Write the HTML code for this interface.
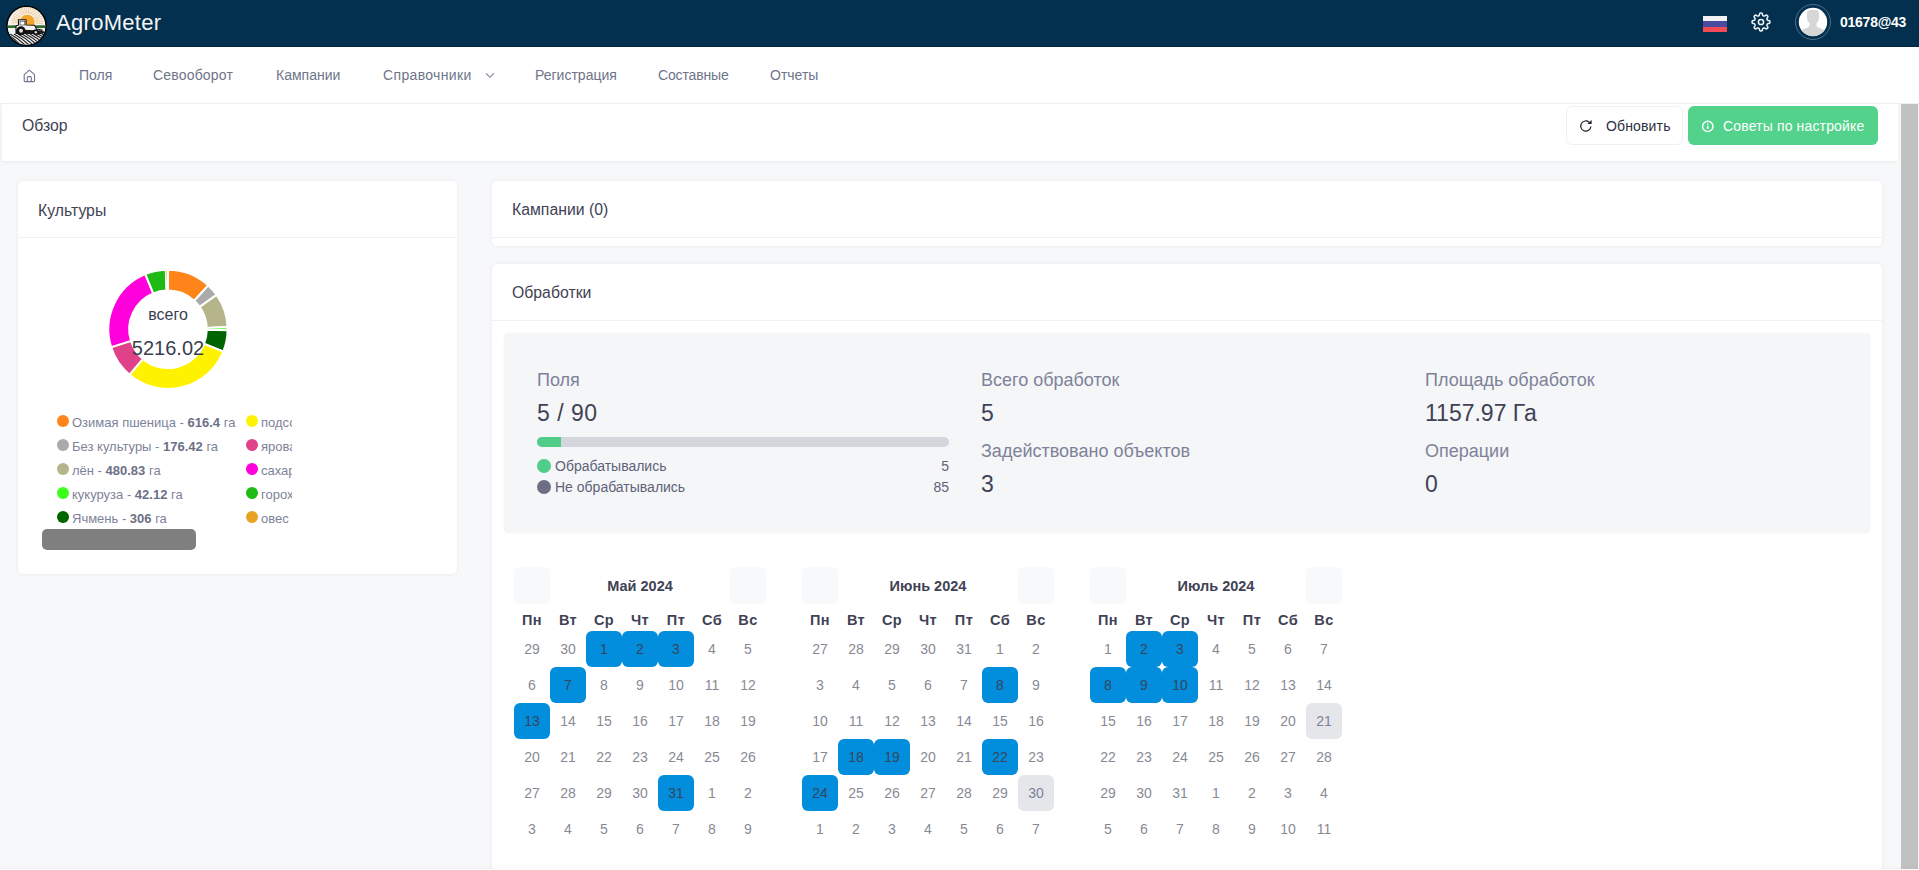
<!DOCTYPE html>
<html><head><meta charset="utf-8">
<style>
*{box-sizing:border-box;margin:0;padding:0}
html,body{width:1919px;height:870px;overflow:hidden}
body{position:relative;background:#f7f8fa;font-family:"Liberation Sans",sans-serif;color:#3f4254}
.abs{position:absolute}
#hdr{left:0;top:0;width:1919px;height:47px;background:#03304e;border-bottom:1px solid #012642}
#logo{left:6px;top:6px;width:40px;height:40px;border-radius:50%;background:#000;overflow:hidden}
#brand{left:56px;top:10px;font-size:22px;color:#f4f5f7;letter-spacing:0.3px;line-height:26px}
#user{left:1840px;top:14px;font-size:14px;font-weight:700;color:#fff;line-height:16px;letter-spacing:-0.25px}
#nav{left:0;top:47px;width:1919px;height:56px;background:#fff}
.nv{position:absolute;top:20px;font-size:14px;color:#6e7489;line-height:16px;white-space:nowrap}
#toolbar{left:2px;top:103px;width:1896px;height:58px;background:#fff;box-shadow:0 1px 4px rgba(0,0,0,0.06);border-top:1px solid #eef0f3}
.card{position:absolute;background:#fff;border-radius:5px;box-shadow:0 0 4px rgba(82,63,105,0.07)}
.ctitle{position:absolute;font-size:15.8px;color:#3f4254;white-space:nowrap;line-height:18px}
.chr{position:absolute;left:0;right:0;height:1px;background:#eff2f5}
#sb{left:1901px;top:104px;width:17px;height:765px;background:#c1c1c1}

.sbox{position:absolute;left:12px;top:69px;width:1366px;height:200px;background:#f5f6f8;border-radius:5px;box-shadow:0 0 1px rgba(0,0,0,0.12)}
.lbl{position:absolute;font-size:18px;line-height:20px;color:#7e8299;white-space:nowrap}
.val{position:absolute;font-size:23px;line-height:26px;color:#3f4254;white-space:nowrap;letter-spacing:0}
.pbar{position:absolute;left:33px;top:104px;width:412px;height:10px;border-radius:5px;background:#d5d5de;overflow:hidden}
.pbar i{position:absolute;left:0;top:0;width:24px;height:10px;background:#50cd89}
.lg{position:absolute;font-size:14px;line-height:16px;color:#5e6278;white-space:nowrap}
.dot{position:absolute;width:14px;height:14px;border-radius:50%}
.cal{position:absolute;width:252px;height:290px}
.cnav{position:absolute;top:0;width:36px;height:37px;background:#f8f9fa;border-radius:5px}
.ctt{position:absolute;left:0;width:252px;top:11px;text-align:center;font-size:14.5px;line-height:16px;font-weight:700;color:#3f4254}
.wd{position:absolute;top:45px;width:36px;text-align:center;font-size:14.5px;letter-spacing:0.4px;line-height:16px;font-weight:700;color:#3f4254}
.dy{position:absolute;width:36px;height:36px;line-height:37px;text-align:center;font-size:14px;color:#878a94;border-radius:6px}
.dy.sel{background:#038ddd;color:#33475a}
.dy.tdy{background:#e4e6ea;color:#7e8299}

.dtx{position:absolute;left:118px;width:100px;text-align:center;color:#3a3f4f;white-space:nowrap}
.ldot{position:absolute;width:12px;height:12px;border-radius:50%;margin-top:0}
.ltx{position:absolute;font-size:13px;line-height:15px;color:#7e8299;white-space:nowrap}
.ltx b{color:#6c7086}
</style></head><body>

<div id="hdr" class="abs">
  <svg class="abs" style="left:6px;top:5px" width="41" height="42" viewBox="0 0 41 42">
<defs><clipPath id="lc"><circle cx="20.5" cy="20.8" r="18.8"/></clipPath></defs>
<circle cx="20.5" cy="20.8" r="20.4" fill="#060606"/>
<g clip-path="url(#lc)">
<rect x="0" y="0" width="41" height="42" fill="#f6f4f0"/>
<g stroke="#f1c690" stroke-width="1" opacity="0.85"><line x1="29.6" y1="18.0" x2="37.2" y2="18.8"/><line x1="29.6" y1="16.7" x2="37.3" y2="16.3"/><line x1="29.4" y1="15.4" x2="37.0" y2="13.8"/><line x1="29.0" y1="14.1" x2="36.2" y2="11.4"/><line x1="28.5" y1="13.0" x2="35.2" y2="9.1"/><line x1="27.8" y1="11.9" x2="33.7" y2="7.0"/><line x1="26.9" y1="10.9" x2="32.0" y2="5.2"/><line x1="25.8" y1="10.1" x2="30.0" y2="3.7"/><line x1="24.7" y1="9.5" x2="27.8" y2="2.5"/><line x1="23.4" y1="9.1" x2="25.4" y2="1.6"/><line x1="22.2" y1="8.8" x2="23.0" y2="1.2"/><line x1="20.9" y1="8.8" x2="20.5" y2="1.1"/><line x1="19.6" y1="9.0" x2="18.0" y2="1.4"/><line x1="18.3" y1="9.4" x2="15.6" y2="2.2"/><line x1="17.2" y1="9.9" x2="13.3" y2="3.2"/><line x1="16.1" y1="10.6" x2="11.2" y2="4.7"/><line x1="15.1" y1="11.5" x2="9.4" y2="6.4"/><line x1="14.3" y1="12.6" x2="7.9" y2="8.4"/><line x1="13.7" y1="13.7" x2="6.7" y2="10.6"/><line x1="13.3" y1="15.0" x2="5.8" y2="13.0"/><line x1="13.0" y1="16.2" x2="5.4" y2="15.4"/><line x1="13.0" y1="17.5" x2="5.3" y2="17.9"/></g>
<circle cx="21.3" cy="17.1" r="7.4" fill="#f2a528"/>
<path d="M0 20.6 Q10 19.6 20 21 Q30 19.8 41 20.4 L41 23 L0 23 Z" fill="#2f6d2c"/>
<rect x="0" y="23" width="41" height="20" fill="#f0f0f0"/>
<g stroke="#1a1a1a" stroke-width="1.2" fill="none"><path d="M-12 29 Q-2 34 8 45"/><path d="M-8 29 Q2 34 12 45"/><path d="M-4 29 Q6 34 16 45"/><path d="M0 29 Q10 34 20 45"/><path d="M4 29 Q14 34 24 45"/><path d="M8 29 Q18 34 28 45"/><path d="M12 29 Q22 34 32 45"/><path d="M16 29 Q26 34 36 45"/><path d="M20 29 Q30 34 40 45"/><path d="M24 29 Q34 34 44 45"/><path d="M28 29 Q38 34 48 45"/><path d="M32 29 Q42 34 52 45"/><path d="M36 29 Q46 34 56 45"/><path d="M40 29 Q50 34 60 45"/></g>
<rect x="0" y="23" width="41" height="5.5" fill="#efefef"/>
<path d="M7 23 L41 23 L41 28.5 L7 28.5 Z" fill="none"/>
<path d="M10 28.5 L10 21 L12.5 20 L12.5 14.8 L20 14.8 L20 20 L28.5 20.3 L30.5 24 L36 25 L36 28.5 Z" fill="#f4f4f4" stroke="#111" stroke-width="1.1" stroke-linejoin="round"/>
<rect x="14" y="16.2" width="4.8" height="3.8" fill="#fff" stroke="#222" stroke-width="0.6"/>
<path d="M10 24.5 L36 25.5 L36 29 L10 29 Z" fill="#161616"/>
<circle cx="15" cy="25.8" r="4.5" fill="#111"/><circle cx="15" cy="25.8" r="2" fill="#dcdcdc"/>
<circle cx="29.8" cy="27.2" r="2.9" fill="#111"/><circle cx="29.8" cy="27.2" r="1.2" fill="#dcdcdc"/>
<path d="M34 27 L38 26 L39 28.5 L34 29 Z" fill="#222"/>
</g></svg>
  <div id="brand" class="abs">AgroMeter</div>
  <div id="user" class="abs">01678@43</div>
<div class="abs" style="left:1703px;top:16px;width:24px;height:16px;background:linear-gradient(#f2f2f2 0 5.5px,#4a4ba0 5.5px 11px,#f24b55 11px)"></div>
<svg class="abs" style="left:1751px;top:12px" width="20" height="20" viewBox="0 0 20 20"><path d="M10.0 1.1L10.3 1.1L10.6 1.1L10.9 1.2L11.1 1.4L11.4 1.8L11.5 2.4L11.6 3.0L11.8 3.4L11.9 3.6L12.1 3.7L12.3 3.8L12.5 3.9L12.7 4.0L12.9 4.1L13.1 4.1L13.4 4.1L13.8 3.9L14.3 3.6L14.9 3.2L15.3 3.1L15.6 3.2L15.9 3.3L16.1 3.5L16.3 3.7L16.5 3.9L16.7 4.1L16.8 4.4L16.9 4.7L16.8 5.1L16.4 5.7L16.1 6.2L15.9 6.6L15.9 6.9L15.9 7.1L16.0 7.3L16.1 7.5L16.2 7.7L16.3 7.9L16.4 8.1L16.6 8.2L17.0 8.4L17.6 8.5L18.2 8.6L18.6 8.9L18.8 9.1L18.9 9.4L18.9 9.7L18.9 10.0L18.9 10.3L18.9 10.6L18.8 10.9L18.6 11.1L18.2 11.4L17.6 11.5L17.0 11.6L16.6 11.8L16.4 11.9L16.3 12.1L16.2 12.3L16.1 12.5L16.0 12.7L15.9 12.9L15.9 13.1L15.9 13.4L16.1 13.8L16.4 14.3L16.8 14.9L16.9 15.3L16.8 15.6L16.7 15.9L16.5 16.1L16.3 16.3L16.1 16.5L15.9 16.7L15.6 16.8L15.3 16.9L14.9 16.8L14.3 16.4L13.8 16.1L13.4 15.9L13.1 15.9L12.9 15.9L12.7 16.0L12.5 16.1L12.3 16.2L12.1 16.3L11.9 16.4L11.8 16.6L11.6 17.0L11.5 17.6L11.4 18.2L11.1 18.6L10.9 18.8L10.6 18.9L10.3 18.9L10.0 18.9L9.7 18.9L9.4 18.9L9.1 18.8L8.9 18.6L8.6 18.2L8.5 17.6L8.4 17.0L8.2 16.6L8.1 16.4L7.9 16.3L7.7 16.2L7.5 16.1L7.3 16.0L7.1 15.9L6.9 15.9L6.6 15.9L6.2 16.1L5.7 16.4L5.1 16.8L4.7 16.9L4.4 16.8L4.1 16.7L3.9 16.5L3.7 16.3L3.5 16.1L3.3 15.9L3.2 15.6L3.1 15.3L3.2 14.9L3.6 14.3L3.9 13.8L4.1 13.4L4.1 13.1L4.1 12.9L4.0 12.7L3.9 12.5L3.8 12.3L3.7 12.1L3.6 11.9L3.4 11.8L3.0 11.6L2.4 11.5L1.8 11.4L1.4 11.1L1.2 10.9L1.1 10.6L1.1 10.3L1.1 10.0L1.1 9.7L1.1 9.4L1.2 9.1L1.4 8.9L1.8 8.6L2.4 8.5L3.0 8.4L3.4 8.2L3.6 8.1L3.7 7.9L3.8 7.7L3.9 7.5L4.0 7.3L4.1 7.1L4.1 6.9L4.1 6.6L3.9 6.2L3.6 5.7L3.2 5.1L3.1 4.7L3.2 4.4L3.3 4.1L3.5 3.9L3.7 3.7L3.9 3.5L4.1 3.3L4.4 3.2L4.7 3.1L5.1 3.2L5.7 3.6L6.2 3.9L6.6 4.1L6.9 4.1L7.1 4.1L7.3 4.0L7.5 3.9L7.7 3.8L7.9 3.7L8.1 3.6L8.2 3.4L8.4 3.0L8.5 2.4L8.6 1.8L8.9 1.4L9.1 1.2L9.4 1.1L9.7 1.1Z" fill="none" stroke="#f2f4f6" stroke-width="1.5" stroke-linejoin="round"/><circle cx="10" cy="10" r="2.6" fill="none" stroke="#f2f4f6" stroke-width="1.5"/></svg>
<svg class="abs" style="left:1795px;top:4px" width="36" height="36" viewBox="0 0 36 36">
<circle cx="18" cy="18" r="17.5" fill="none" stroke="#4f6d87" stroke-width="1"/>
<defs><clipPath id="ac"><circle cx="18" cy="18" r="14.2"/></clipPath></defs>
<circle cx="18" cy="18" r="14.2" fill="#fff"/>
<g clip-path="url(#ac)" fill="#d6d6d6">
<path d="M12 9.5 Q12 6 15.5 6 L20.5 6 Q24 6 24 9.5 L24 14 Q24 17 21.5 19 L21.5 21.5 Q22 23.5 26 24.5 Q31 26 32 32 L4 32 Q5 26 10 24.5 Q14 23.5 14.5 21.5 L14.5 19 Q12 17 12 14 Z"/>
</g></svg>

</div>

<div id="nav" class="abs"></div>
<svg class="abs" style="left:23px;top:69px" width="13" height="14" viewBox="0 0 13 14"><path d="M1.2 5.6 L6.3 1.2 L11.5 5.6 L11.5 11.8 Q11.5 12.6 10.7 12.6 L2 12.6 Q1.2 12.6 1.2 11.8 Z M4.3 12.6 L4.3 8.6 Q4.3 7.6 5.3 7.6 L7.3 7.6 Q8.3 7.6 8.3 8.6 L8.3 12.6" fill="none" stroke="#6d7290" stroke-width="1.1" stroke-linejoin="round"/></svg>
<svg class="abs" style="left:485px;top:72px" width="10" height="7" viewBox="0 0 10 7"><path d="M1 1.3 L5 5.3 L9 1.3" fill="none" stroke="#7e8299" stroke-width="1.1"/></svg>
<div class="abs" style="left:0;top:47px">
  <span class="nv" style="left:79px">Поля</span>
  <span class="nv" style="left:153px;letter-spacing:0.18px">Севооборот</span>
  <span class="nv" style="left:276px">Кампании</span>
  <span class="nv" style="left:383px;letter-spacing:0.35px">Справочники</span>
  <span class="nv" style="left:535px">Регистрация</span>
  <span class="nv" style="left:658px;letter-spacing:-0.15px">Составные</span>
  <span class="nv" style="left:770px">Отчеты</span>
</div>

<div id="toolbar" class="abs">
  <div class="abs" style="left:20px;top:13px;font-size:15.8px;line-height:18px;color:#3f4254">Обзор</div>
</div>

<div class="card" style="left:18px;top:181px;width:439px;height:393px">
  <div class="ctitle" style="left:20px;top:20.5px">Культуры</div>
  <div class="chr" style="top:56px"></div>
</div>

<div class="card" style="left:492px;top:181px;width:1390px;height:65px">
  <div class="ctitle" style="left:20px;top:20px">Кампании (0)</div>
  <div class="chr" style="top:56px"></div>
</div>

<div class="card" style="left:492px;top:264px;width:1390px;height:620px">
  <div class="ctitle" style="left:20px;top:20px">Обработки</div>
  <div class="chr" style="top:56px"></div>

  <div class="sbox">
    <div class="lbl" style="left:33px;top:37px">Поля</div>
    <div class="val" style="left:33px;top:66.5px;letter-spacing:0.5px">5 / 90</div>
    <div class="pbar"><i></i></div>
    <div class="dot" style="left:33px;top:125.5px;background:#50cd89"></div>
    <div class="lg" style="left:51px;top:125px">Обрабатывались</div>
    <div class="lg" style="left:335px;width:110px;text-align:right;top:125px">5</div>
    <div class="dot" style="left:33px;top:147px;background:#6d6f85"></div>
    <div class="lg" style="left:51px;top:146px">Не обрабатывались</div>
    <div class="lg" style="left:335px;width:110px;text-align:right;top:146px">85</div>
    <div class="lbl" style="left:477px;top:37px">Всего обработок</div>
    <div class="val" style="left:477px;top:67px">5</div>
    <div class="lbl" style="left:477px;top:108px">Задействовано объектов</div>
    <div class="val" style="left:477px;top:138px">3</div>
    <div class="lbl" style="left:921px;top:37px">Площадь обработок</div>
    <div class="val" style="left:921px;top:67px">1157.97 Га</div>
    <div class="lbl" style="left:921px;top:108px">Операции</div>
    <div class="val" style="left:921px;top:138px">0</div>
  </div>
<div class="cal" style="left:22px;top:303px"><div class="cnav" style="left:0"></div><div class="cnav" style="left:216px"></div><div class="ctt">Май 2024</div><div class="wd" style="left:0px">Пн</div><div class="wd" style="left:36px">Вт</div><div class="wd" style="left:72px">Ср</div><div class="wd" style="left:108px">Чт</div><div class="wd" style="left:144px">Пт</div><div class="wd" style="left:180px">Сб</div><div class="wd" style="left:216px">Вс</div><div class="dy" style="left:0px;top:64px">29</div><div class="dy" style="left:36px;top:64px">30</div><div class="dy sel" style="left:72px;top:64px">1</div><div class="dy sel" style="left:108px;top:64px">2</div><div class="dy sel" style="left:144px;top:64px">3</div><div class="dy" style="left:180px;top:64px">4</div><div class="dy" style="left:216px;top:64px">5</div><div class="dy" style="left:0px;top:100px">6</div><div class="dy sel" style="left:36px;top:100px">7</div><div class="dy" style="left:72px;top:100px">8</div><div class="dy" style="left:108px;top:100px">9</div><div class="dy" style="left:144px;top:100px">10</div><div class="dy" style="left:180px;top:100px">11</div><div class="dy" style="left:216px;top:100px">12</div><div class="dy sel" style="left:0px;top:136px">13</div><div class="dy" style="left:36px;top:136px">14</div><div class="dy" style="left:72px;top:136px">15</div><div class="dy" style="left:108px;top:136px">16</div><div class="dy" style="left:144px;top:136px">17</div><div class="dy" style="left:180px;top:136px">18</div><div class="dy" style="left:216px;top:136px">19</div><div class="dy" style="left:0px;top:172px">20</div><div class="dy" style="left:36px;top:172px">21</div><div class="dy" style="left:72px;top:172px">22</div><div class="dy" style="left:108px;top:172px">23</div><div class="dy" style="left:144px;top:172px">24</div><div class="dy" style="left:180px;top:172px">25</div><div class="dy" style="left:216px;top:172px">26</div><div class="dy" style="left:0px;top:208px">27</div><div class="dy" style="left:36px;top:208px">28</div><div class="dy" style="left:72px;top:208px">29</div><div class="dy" style="left:108px;top:208px">30</div><div class="dy sel" style="left:144px;top:208px">31</div><div class="dy" style="left:180px;top:208px">1</div><div class="dy" style="left:216px;top:208px">2</div><div class="dy" style="left:0px;top:244px">3</div><div class="dy" style="left:36px;top:244px">4</div><div class="dy" style="left:72px;top:244px">5</div><div class="dy" style="left:108px;top:244px">6</div><div class="dy" style="left:144px;top:244px">7</div><div class="dy" style="left:180px;top:244px">8</div><div class="dy" style="left:216px;top:244px">9</div></div>
<div class="cal" style="left:310px;top:303px"><div class="cnav" style="left:0"></div><div class="cnav" style="left:216px"></div><div class="ctt">Июнь 2024</div><div class="wd" style="left:0px">Пн</div><div class="wd" style="left:36px">Вт</div><div class="wd" style="left:72px">Ср</div><div class="wd" style="left:108px">Чт</div><div class="wd" style="left:144px">Пт</div><div class="wd" style="left:180px">Сб</div><div class="wd" style="left:216px">Вс</div><div class="dy" style="left:0px;top:64px">27</div><div class="dy" style="left:36px;top:64px">28</div><div class="dy" style="left:72px;top:64px">29</div><div class="dy" style="left:108px;top:64px">30</div><div class="dy" style="left:144px;top:64px">31</div><div class="dy" style="left:180px;top:64px">1</div><div class="dy" style="left:216px;top:64px">2</div><div class="dy" style="left:0px;top:100px">3</div><div class="dy" style="left:36px;top:100px">4</div><div class="dy" style="left:72px;top:100px">5</div><div class="dy" style="left:108px;top:100px">6</div><div class="dy" style="left:144px;top:100px">7</div><div class="dy sel" style="left:180px;top:100px">8</div><div class="dy" style="left:216px;top:100px">9</div><div class="dy" style="left:0px;top:136px">10</div><div class="dy" style="left:36px;top:136px">11</div><div class="dy" style="left:72px;top:136px">12</div><div class="dy" style="left:108px;top:136px">13</div><div class="dy" style="left:144px;top:136px">14</div><div class="dy" style="left:180px;top:136px">15</div><div class="dy" style="left:216px;top:136px">16</div><div class="dy" style="left:0px;top:172px">17</div><div class="dy sel" style="left:36px;top:172px">18</div><div class="dy sel" style="left:72px;top:172px">19</div><div class="dy" style="left:108px;top:172px">20</div><div class="dy" style="left:144px;top:172px">21</div><div class="dy sel" style="left:180px;top:172px">22</div><div class="dy" style="left:216px;top:172px">23</div><div class="dy sel" style="left:0px;top:208px">24</div><div class="dy" style="left:36px;top:208px">25</div><div class="dy" style="left:72px;top:208px">26</div><div class="dy" style="left:108px;top:208px">27</div><div class="dy" style="left:144px;top:208px">28</div><div class="dy" style="left:180px;top:208px">29</div><div class="dy tdy" style="left:216px;top:208px">30</div><div class="dy" style="left:0px;top:244px">1</div><div class="dy" style="left:36px;top:244px">2</div><div class="dy" style="left:72px;top:244px">3</div><div class="dy" style="left:108px;top:244px">4</div><div class="dy" style="left:144px;top:244px">5</div><div class="dy" style="left:180px;top:244px">6</div><div class="dy" style="left:216px;top:244px">7</div></div>
<div class="cal" style="left:598px;top:303px"><div class="cnav" style="left:0"></div><div class="cnav" style="left:216px"></div><div class="ctt">Июль 2024</div><div class="wd" style="left:0px">Пн</div><div class="wd" style="left:36px">Вт</div><div class="wd" style="left:72px">Ср</div><div class="wd" style="left:108px">Чт</div><div class="wd" style="left:144px">Пт</div><div class="wd" style="left:180px">Сб</div><div class="wd" style="left:216px">Вс</div><div class="dy" style="left:0px;top:64px">1</div><div class="dy sel" style="left:36px;top:64px">2</div><div class="dy sel" style="left:72px;top:64px">3</div><div class="dy" style="left:108px;top:64px">4</div><div class="dy" style="left:144px;top:64px">5</div><div class="dy" style="left:180px;top:64px">6</div><div class="dy" style="left:216px;top:64px">7</div><div class="dy sel" style="left:0px;top:100px">8</div><div class="dy sel" style="left:36px;top:100px">9</div><div class="dy sel" style="left:72px;top:100px">10</div><div class="dy" style="left:108px;top:100px">11</div><div class="dy" style="left:144px;top:100px">12</div><div class="dy" style="left:180px;top:100px">13</div><div class="dy" style="left:216px;top:100px">14</div><div class="dy" style="left:0px;top:136px">15</div><div class="dy" style="left:36px;top:136px">16</div><div class="dy" style="left:72px;top:136px">17</div><div class="dy" style="left:108px;top:136px">18</div><div class="dy" style="left:144px;top:136px">19</div><div class="dy" style="left:180px;top:136px">20</div><div class="dy tdy" style="left:216px;top:136px">21</div><div class="dy" style="left:0px;top:172px">22</div><div class="dy" style="left:36px;top:172px">23</div><div class="dy" style="left:72px;top:172px">24</div><div class="dy" style="left:108px;top:172px">25</div><div class="dy" style="left:144px;top:172px">26</div><div class="dy" style="left:180px;top:172px">27</div><div class="dy" style="left:216px;top:172px">28</div><div class="dy" style="left:0px;top:208px">29</div><div class="dy" style="left:36px;top:208px">30</div><div class="dy" style="left:72px;top:208px">31</div><div class="dy" style="left:108px;top:208px">1</div><div class="dy" style="left:144px;top:208px">2</div><div class="dy" style="left:180px;top:208px">3</div><div class="dy" style="left:216px;top:208px">4</div><div class="dy" style="left:0px;top:244px">5</div><div class="dy" style="left:36px;top:244px">6</div><div class="dy" style="left:72px;top:244px">7</div><div class="dy" style="left:108px;top:244px">8</div><div class="dy" style="left:144px;top:244px">9</div><div class="dy" style="left:180px;top:244px">10</div><div class="dy" style="left:216px;top:244px">11</div></div>
</div>

<svg class="abs" style="left:0;top:0" width="460" height="600" viewBox="0 0 460 600"><g stroke="#fff" stroke-width="2"><path d="M168.00 269.70A59.6 59.6 0 0 1 208.30 285.39L194.23 300.71A38.8 38.8 0 0 0 168.00 290.50Z" fill="#ff851b"/><path d="M208.30 285.39A59.6 59.6 0 0 1 216.65 294.88L199.67 306.89A38.8 38.8 0 0 0 194.23 300.71Z" fill="#aaaaaa"/><path d="M216.65 294.88A59.6 59.6 0 0 1 227.56 327.12L206.77 327.88A38.8 38.8 0 0 0 199.67 306.89Z" fill="#b5b48a"/><path d="M227.56 327.12A59.6 59.6 0 0 1 227.59 330.14L206.80 329.85A38.8 38.8 0 0 0 206.77 327.88Z" fill="#3cff1e"/><path d="M227.59 330.14A59.6 59.6 0 0 1 223.29 351.56L203.99 343.79A38.8 38.8 0 0 0 206.80 329.85Z" fill="#006400"/><path d="M223.29 351.56A59.6 59.6 0 0 1 129.46 374.76L142.91 358.90A38.8 38.8 0 0 0 203.99 343.79Z" fill="#fff200"/><path d="M129.46 374.76A59.6 59.6 0 0 1 111.13 347.13L130.98 340.91A38.8 38.8 0 0 0 142.91 358.90Z" fill="#e0428a"/><path d="M111.13 347.13A59.6 59.6 0 0 1 145.31 274.19L153.23 293.42A38.8 38.8 0 0 0 130.98 340.91Z" fill="#ff00dc"/><path d="M145.31 274.19A59.6 59.6 0 0 1 165.83 269.74L166.59 290.53A38.8 38.8 0 0 0 153.23 293.42Z" fill="#1fba14"/><path d="M165.83 269.74A59.6 59.6 0 0 1 168.00 269.70L168.00 290.50A38.8 38.8 0 0 0 166.59 290.53Z" fill="#e8a323"/></g><path d="M165.85 270.74L166.88 270.71L166.74 284.32Z" fill="#eab050" opacity="0.8"/></svg>
<div class="dtx" style="top:306px;font-size:16px;line-height:18px">всего</div>
<div class="dtx" style="top:337px;font-size:20px;line-height:23px">5216.02</div>
<div class="ldot" style="left:57px;top:415px;background:#ff851b"></div><div class="ltx" style="left:72px;top:415px">Озимая пшеница - <b>616.4</b> га</div>
<div class="ldot" style="left:57px;top:439px;background:#aaaaaa"></div><div class="ltx" style="left:72px;top:439px">Без культуры - <b>176.42</b> га</div>
<div class="ldot" style="left:57px;top:463px;background:#b5b48a"></div><div class="ltx" style="left:72px;top:463px">лён - <b>480.83</b> га</div>
<div class="ldot" style="left:57px;top:487px;background:#3cff1e"></div><div class="ltx" style="left:72px;top:487px">кукуруза - <b>42.12</b> га</div>
<div class="ldot" style="left:57px;top:511px;background:#006400"></div><div class="ltx" style="left:72px;top:511px">Ячмень - <b>306</b> га</div>
<div class="abs" style="left:246px;top:405px;width:46px;height:125px;overflow:hidden">
<div class="ldot" style="left:0;top:10px;background:#fff200"></div><div class="ltx" style="left:15px;top:10px">подсолнечник</div>
<div class="ldot" style="left:0;top:34px;background:#e0428a"></div><div class="ltx" style="left:15px;top:34px">яровая пшеница</div>
<div class="ldot" style="left:0;top:58px;background:#ff00dc"></div><div class="ltx" style="left:15px;top:58px">сахарная свекла</div>
<div class="ldot" style="left:0;top:82px;background:#1fba14"></div><div class="ltx" style="left:15px;top:82px">горох</div>
<div class="ldot" style="left:0;top:106px;background:#e8a323"></div><div class="ltx" style="left:15px;top:106px">овес</div>
</div>
<div class="abs" style="left:42px;top:529px;width:154px;height:21px;background:#7f7f7f;border-radius:5px"></div>

<div class="abs" style="left:1566px;top:106px;width:117px;height:39px;border:1px solid #eef0f4;border-radius:6px;background:#fff"></div>
<svg class="abs" style="left:1579px;top:119px" width="14" height="14" viewBox="0 0 14 14"><path d="M11.9 7.5 A5.1 5.1 0 1 1 10.2 3.2" fill="none" stroke="#1e2130" stroke-width="1.2"/><path d="M8.3 4.9 L12.6 4.9 L12.6 0.9 Z" fill="#1e2130"/></svg>
<div class="abs" style="left:1606px;top:118px;font-size:14px;letter-spacing:0.15px;line-height:16px;color:#2b2f3f;white-space:nowrap">Обновить</div>
<div class="abs" style="left:1688px;top:106px;width:190px;height:39px;border-radius:6px;background:#52d28b"></div>
<svg class="abs" style="left:1701px;top:120px" width="14" height="14" viewBox="0 0 14 14"><circle cx="6.8" cy="6.4" r="5.2" fill="none" stroke="#fff" stroke-width="1.45"/><rect x="6.1" y="5.7" width="1.4" height="3.3" fill="#fff"/><circle cx="6.8" cy="4.0" r="0.8" fill="#fff"/></svg>
<div class="abs" style="left:1723px;top:118px;font-size:14px;letter-spacing:0.15px;line-height:16px;color:#fff;white-space:nowrap">Советы по настройке</div>
<div class="abs" style="left:0;top:103px;width:1919px;height:1px;background:#eef0f3"></div>
<div id="sb" class="abs"></div>
<div class="abs" style="left:0;top:869px;width:1919px;height:1px;background:#fff;box-shadow:0 -1px 3px rgba(60,70,90,0.10)"></div>
</body></html>
